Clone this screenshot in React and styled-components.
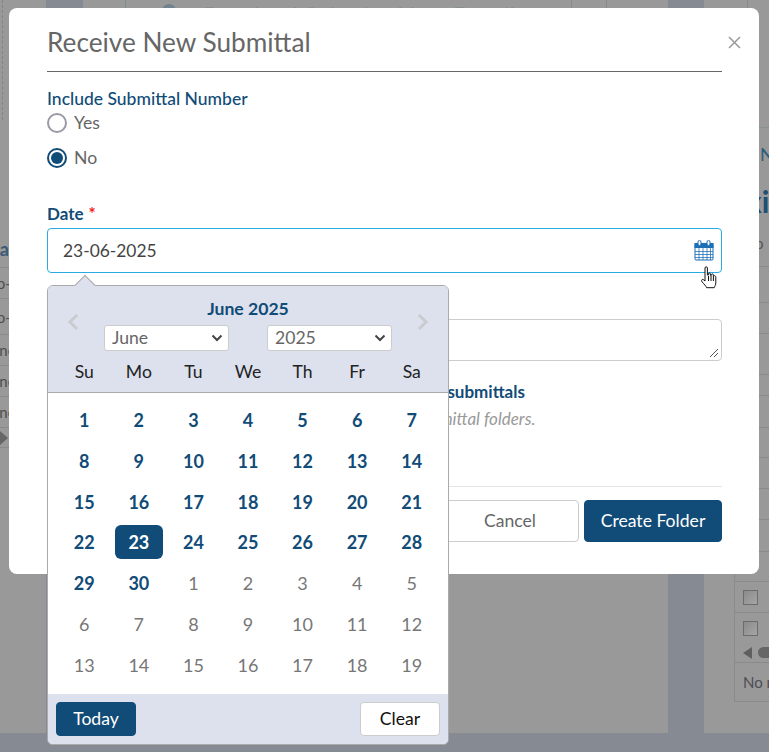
import React from 'react';
import styled, { createGlobalStyle } from 'styled-components';

const navy = '#114b77';
const headerBlue = '#dce1ed';

const selectChevron =
  "data:image/svg+xml,%3Csvg xmlns='http://www.w3.org/2000/svg' width='12' height='8' viewBox='0 0 12 8'%3E%3Cpath d='M1.500 1.500L6 6l4.500-4.500' fill='none' stroke='%23444' stroke-width='2'/%3E%3C/svg%3E";

const GlobalStyle = createGlobalStyle`
  html, body {
    margin: 0;
    padding: 0;
    height: 100%;
    overflow: hidden;
    font-family: Lato, 'Open Sans', sans-serif;
  }
`;

const Page = styled.div`
  width: 769px;
  height: 752px;
  background: #868a93;
  display: flex;
  align-items: flex-start;
  overflow: hidden;
`;

const BackPanel = styled.div`
  width: ${p => p.$width}px;
  height: 733px;
  margin-left: ${p => p.$gap || 0}px;
  background: #999;
  display: flex;
  flex-direction: column;
  flex: none;
  overflow: hidden;
`;

const DashedTick = styled.div`
  width: 0;
  height: 120px;
  margin-left: 2px;
  border-left: 1px dashed #7d8688;
  flex: none;
`;

const BackTitle = styled.div`
  width: 9px;
  margin-top: 117px;
  display: flex;
  justify-content: flex-end;
  font-size: 18px;
  line-height: 24px;
  font-weight: 700;
  color: #3a5a75;
`;

const BackRow = styled.div`
  width: 19px;
  height: ${p => p.$h || 31}px;
  box-sizing: border-box;
  display: flex;
  justify-content: flex-end;
  align-items: center;
  white-space: nowrap;
  font-size: 15px;
  color: #4d4d4d;
  border-top: 1px solid #8a8a8a;
`;

const BackLines = styled.div`
  margin-top: 6px;
`;

const BackArrowRow = styled.div`
  height: ${p => p.$h}px;
  box-sizing: border-box;
  border-top: 1px solid #8a8a8a;
  display: flex;
  align-items: flex-start;
`;

const BackArrow = styled.div`
  width: 0;
  height: 0;
  margin-top: 3px;
  border-top: 7px solid transparent;
  border-bottom: 7px solid transparent;
  border-left: 8px solid #666;
`;

const TopStrip = styled.div`
  height: 8px;
  display: flex;
  overflow: hidden;
  flex: none;
`;

const Tick = styled.div`
  width: 1px;
  height: 8px;
  background: #828b8d;
  margin-left: ${p => p.$left}px;
  flex: none;
`;

const BackIcon = styled.div`
  width: 14px;
  height: 14px;
  margin: 4px 0 0 36px;
  border-radius: 50%;
  background: #71838f;
  flex: none;
`;

const BackHeading = styled.div`
  width: 340px;
  margin: 0 0 0 27px;
  flex: none;
  font-size: 24px;
  line-height: 30px;
  color: #868f94;
  white-space: nowrap;
  overflow: hidden;
`;

const SideDash = styled.div`
  margin: 119px 0 0 55px;
  border-top: 1px dashed #85908f;
`;

const SideName = styled.div`
  margin: 14px 0 0 56px;
  font-size: 18px;
  line-height: 24px;
  color: #2f5a7b;
  white-space: nowrap;
`;

const SideBold = styled.div`
  margin: 15px 0 0 42px;
  font-size: 30px;
  line-height: 40px;
  font-weight: 700;
  color: #1f4f74;
  white-space: nowrap;
`;

const SideInfo = styled.div`
  margin: 12px 0 0 46px;
  font-size: 15px;
  line-height: 20px;
  color: #555;
  white-space: nowrap;
`;

const SideTable = styled.div`
  margin: 13px 0 0 30px;
  border-left: 1px solid #8a8a8a;
  border-bottom: 1px solid #8a8a8a;
  flex: none;
`;

const SideRow = styled.div`
  height: ${p => p.$h || 31}px;
  box-sizing: border-box;
  padding-left: 8px;
  display: flex;
  align-items: center;
  gap: 6px;
  border-top: ${p => (p.$flat ? '0' : '1px solid #8a8a8a')};
  font-size: 15px;
  color: #4d4d55;
  white-space: nowrap;
  overflow: hidden;
`;

const BackCheck = styled.div`
  width: 15px;
  height: 15px;
  box-sizing: border-box;
  border: 1px solid #6c6c6c;
  background: linear-gradient(135deg, #8b8b8b, #a5a5a5);
  flex: none;
`;

const ScrollArrow = styled.div`
  width: 0;
  height: 0;
  border-top: 6px solid transparent;
  border-bottom: 6px solid transparent;
  border-right: 9px solid #5f5f5f;
  flex: none;
`;

const ScrollThumb = styled.div`
  width: 30px;
  height: 11px;
  border-radius: 6px;
  background: #666;
  flex: none;
`;

const Modal = styled.div`
  position: absolute;
  left: 9px;
  top: 8px;
  width: 750px;
  height: 566px;
  box-sizing: border-box;
  padding: 0 37px 0 38px;
  background: #fff;
  border-radius: 8px;
`;

const ModalHeader = styled.div`
  height: 64px;
  box-sizing: border-box;
  padding-top: 17px;
  border-bottom: 1px solid #666;
  position: relative;
`;

const Title = styled.h2`
  margin: 0;
  font-size: 26.2px;
  line-height: 34px;
  font-weight: 400;
  color: #666;
`;

const CloseButton = styled.button`
  position: absolute;
  right: -19px;
  top: 28px;
  width: 13px;
  height: 13px;
  padding: 0;
  border: 0;
  background: none;
  display: block;
  line-height: 0;
`;

const FieldLabel = styled.div`
  margin-top: ${p => p.$top}px;
  font-size: ${p => p.$size || 17}px;
  line-height: 20px;
  font-weight: ${p => p.$weight || 700};
  color: ${navy};
  white-space: nowrap;
`;

const Required = styled.span`
  margin-left: 5px;
  color: #ee2222;
`;

const RadioGroup = styled.div`
  margin-top: 4px;
  display: flex;
  flex-direction: column;
  gap: 15px;
`;

const RadioRow = styled.div`
  height: 20px;
  display: flex;
  align-items: center;
  gap: 7px;
  font-size: 17.6px;
  color: #666;
`;

const RadioText = styled.span`
  line-height: 18px;
  margin-bottom: 1px;
`;

const RadioMark = styled.span`
  width: 20px;
  height: 20px;
  box-sizing: border-box;
  border-radius: 50%;
  border: 2px solid ${p => (p.$on ? navy : '#9a9aa6')};
  display: flex;
  align-items: center;
  justify-content: center;
  &::after {
    content: '';
    width: 12px;
    height: 12px;
    border-radius: 50%;
    background: ${p => (p.$on ? navy : 'transparent')};
  }
`;

const DateField = styled.div`
  position: relative;
  margin-top: 4px;
`;

const DateInput = styled.div`
  height: 45px;
  box-sizing: border-box;
  padding: 0 7px 0 15px;
  border: 1px solid #29abe2;
  border-radius: 4px;
  display: flex;
  align-items: center;
  justify-content: space-between;
  font-size: 17.4px;
  color: #444;
`;

const CursorHand = styled.svg`
  position: absolute;
  right: 4px;
  top: 38px;
`;

const Popover = styled.div`
  position: absolute;
  left: 0;
  top: 57px;
  width: 402px;
  height: 460px;
  box-sizing: border-box;
  border: 1px solid #aaa;
  border-radius: 6px;
  background: #fff;
  display: flex;
  flex-direction: column;
  z-index: 2;
  &::before {
    content: '';
    position: absolute;
    left: 29px;
    top: -8px;
    width: 15px;
    height: 15px;
    background: ${headerBlue};
    border-left: 1px solid #aaa;
    border-top: 1px solid #aaa;
    transform: rotate(45deg);
  }
`;

const PopHeader = styled.div`
  background: ${headerBlue};
  border-bottom: 1px solid #aaa;
  border-radius: 5px 5px 0 0;
  padding-top: 11px;
  position: relative;
`;

const NavGrid = styled.div`
  display: grid;
  grid-template-columns: 56px 1fr 56px;
  grid-template-rows: 24px 30px;
`;

const NavArrow = styled.div`
  grid-row: 1 / span 2;
  grid-column: ${p => (p.$right ? 3 : 1)};
  display: flex;
  align-items: center;
  justify-content: ${p => (p.$right ? 'flex-start' : 'flex-end')};
  padding: 0 ${p => (p.$right ? 0 : 25)}px 5px ${p => (p.$right ? 25 : 0)}px;
  line-height: 0;
`;

const MonthTitle = styled.div`
  grid-column: 2;
  grid-row: 1;
  text-align: center;
  font-size: 17.6px;
  line-height: 24px;
  font-weight: 700;
  color: ${navy};
`;

const SelectRow = styled.div`
  grid-column: 2;
  grid-row: 2;
  display: flex;
  justify-content: space-between;
  align-items: flex-end;
`;

const NativeSelect = styled.select`
  appearance: none;
  width: 125px;
  height: 26px;
  box-sizing: border-box;
  padding: 0 0 2px 7px;
  font-family: Lato, sans-serif;
  font-size: 17.6px;
  color: #666;
  background: #fff url("${selectChevron}") no-repeat right 5px center;
  border: 1px solid #ccc;
  border-radius: 3px;
`;

const WeekRow = styled.div`
  display: grid;
  grid-template-columns: repeat(7, 1fr);
  padding: 9px 9px 8px;
  text-align: center;
  font-size: 17.6px;
  line-height: 24px;
  color: #222;
`;

const DayGrid = styled.div`
  flex: 1;
  display: grid;
  grid-template-columns: repeat(7, 1fr);
  grid-auto-rows: 34px;
  row-gap: 6.8px;
  padding: 10px 9px 0;
`;

const Day = styled.div`
  width: 48px;
  justify-self: center;
  display: flex;
  align-items: center;
  justify-content: center;
  border-radius: 6px;
  font-size: 18px;
  font-weight: ${p => (p.$muted ? 400 : 700)};
  color: ${p => (p.$selected ? '#fff' : p.$muted ? '#777' : navy)};
  background: ${p => (p.$selected ? navy : 'transparent')};
`;

const PopFooter = styled.div`
  height: 50px;
  box-sizing: border-box;
  padding: 8px;
  background: ${headerBlue};
  border-radius: 0 0 5px 5px;
  display: flex;
  justify-content: space-between;
  align-items: center;
`;

const SmallButton = styled.button`
  width: 80px;
  height: 34px;
  padding: 0 0 2px;
  font-family: Lato, sans-serif;
  font-size: 17.6px;
  border-radius: 4px;
  border: 1px solid ${p => (p.$primary ? navy : '#ccc')};
  background: ${p => (p.$primary ? navy : '#fff')};
  color: ${p => (p.$primary ? '#fff' : '#111')};
`;

const NotesBox = styled.div`
  margin-top: 4px;
  height: 42px;
  box-sizing: border-box;
  border: 1px solid #ccc;
  border-radius: 4px;
  position: relative;
  line-height: 0;
`;

const ResizeGrip = styled.svg`
  position: absolute;
  right: 1px;
  bottom: 1px;
`;

const HintText = styled.div`
  margin-top: 7px;
  padding-left: 272px;
  font-size: 17px;
  line-height: 20px;
  font-style: italic;
  color: #999;
  white-space: nowrap;
`;

const CheckLabel = styled(FieldLabel)`
  padding-left: 277px;
`;

const ModalFooter = styled.div`
  margin-top: 57px;
  padding-top: 13px;
  border-top: 1px solid #e5e5e5;
  display: flex;
  justify-content: flex-end;
  gap: 5px;
`;

const FooterButton = styled.button`
  width: 138px;
  height: 42px;
  padding: 0 0 2px;
  font-family: Lato, sans-serif;
  font-size: 17.6px;
  border-radius: 4px;
  border: 1px solid ${p => (p.$primary ? navy : '#ccc')};
  background: ${p => (p.$primary ? navy : '#fff')};
  color: ${p => (p.$primary ? '#fff' : '#666')};
`;

const CalendarIcon = () => (
  <svg width="20" height="21" viewBox="0 0 20 21" fill="none">
    <rect x="1" y="3.5" width="18" height="16.5" rx="1" fill="#fff" stroke="#1a6fb5" />
    <rect x="0.5" y="3" width="19" height="5" fill="#1a6fb5" />
    <rect x="4" y="0.5" width="3" height="5" rx="1.5" fill="#fff" stroke="#1a6fb5" />
    <rect x="13" y="0.5" width="3" height="5" rx="1.5" fill="#fff" stroke="#1a6fb5" />
    <path
      d="M1 11.5h18M1 14.5h18M1 17.5h18M5 8v12M9 8v12M13 8v12M16.5 8v12"
      stroke="#1a6fb5"
      strokeWidth="1"
      opacity="0.75"
    />
  </svg>
);

const Chevron = ({ right }) => (
  <svg width="12" height="18" viewBox="0 0 12 18" fill="none">
    <path
      d={right ? 'M2 2l7 7-7 7' : 'M10 2L3 9l7 7'}
      stroke="#c9cbce"
      strokeWidth="3"
    />
  </svg>
);

const weekDays = ['Su', 'Mo', 'Tu', 'We', 'Th', 'Fr', 'Sa'];
const months = ['January', 'February', 'March', 'April', 'May', 'June', 'July', 'August', 'September', 'October', 'November', 'December'];
const years = [2023, 2024, 2025, 2026, 2027];

const june = Array.from({ length: 30 }, (_, i) => ({ n: i + 1 }));
const july = Array.from({ length: 19 }, (_, i) => ({ n: i + 1, muted: true }));
const days = [...june, ...july];

// rows of the grey table behind the dialog
const sideRows = [36, 31, 41, 21, 32, 30, 31, 31, 32, 30];

export default function App() {
  return (
    <>
      <GlobalStyle />
      <Page>
        <BackPanel $width={46}>
          <DashedTick />
          <BackTitle>Data</BackTitle>
          <BackLines>
            <BackRow>No-S</BackRow>
            <BackRow $h={36}>No-S</BackRow>
            <BackRow>None,</BackRow>
            <BackRow>None,</BackRow>
            <BackRow>None,</BackRow>
            <BackArrowRow $h={20}>
              <BackArrow />
            </BackArrowRow>
            <BackRow $h={38} />
          </BackLines>
        </BackPanel>

        <BackPanel $width={585} $gap={37}>
          <TopStrip>
            <Tick $left={42} />
            <BackIcon />
            <BackHeading>Received Submittal Log Details</BackHeading>
            <Tick $left={28} />
            <Tick $left={34} />
          </TopStrip>
        </BackPanel>

        <BackPanel $width={65} $gap={36}>
          <TopStrip>
            <Tick $left={43} />
          </TopStrip>
          <SideDash />
          <SideName>Name</SideName>
          <SideBold>xisting</SideBold>
          <SideInfo>fo</SideInfo>
          <SideTable>
            {sideRows.map((h, i) => (
              <SideRow key={i} $h={h} />
            ))}
            <SideRow>
              <BackCheck />
            </SideRow>
            <SideRow>
              <BackCheck />
            </SideRow>
            <SideRow $h={19} $flat>
              <ScrollArrow />
              <ScrollThumb />
            </SideRow>
            <SideRow $h={39}>No matching records</SideRow>
          </SideTable>
        </BackPanel>
      </Page>

      <Modal>
        <ModalHeader>
          <Title>Receive New Submittal</Title>
          <CloseButton aria-label="Close">
            <svg width="13" height="13" viewBox="0 0 13 13" fill="none">
              <path d="M1 1l11 11M12 1L1 12" stroke="#999" strokeWidth="1.5" />
            </svg>
          </CloseButton>
        </ModalHeader>

        <FieldLabel $top={17} $weight={500} $size={17.5}>Include Submittal Number</FieldLabel>
        <RadioGroup>
          <RadioRow><RadioMark /><RadioText>Yes</RadioText></RadioRow>
          <RadioRow><RadioMark $on /><RadioText>No</RadioText></RadioRow>
        </RadioGroup>

        <FieldLabel $top={36}>Date<Required>*</Required></FieldLabel>
        <DateField>
          <DateInput>
            23-06-2025
            <CalendarIcon />
          </DateInput>
          <CursorHand width="18" height="24" viewBox="0 0 18 24">
            <path
              d="M5 2c0-1.6 2.4-1.6 2.4 0v7l1 .1V7.8c0-1 2-1 2 0v1.5l1 .1V8.6c0-1 1.9-1 1.9 0v1l.9.1c1-.1 1.6.5 1.6 1.5v5.6c0 2.2-1 3.2-1.6 4.9H6.6c-.6-1.6-2.3-3.2-4.6-6-1.3-1.6.5-3 1.8-1.8L5 15z"
              fill="#fff"
              stroke="#111"
              strokeWidth="1"
            />
            <path d="M8.5 10v5M11 10v5M13.4 10v5" stroke="#111" strokeWidth="1" />
          </CursorHand>

          <Popover>
            <PopHeader>
              <NavGrid>
                <NavArrow><Chevron /></NavArrow>
                <MonthTitle>June 2025</MonthTitle>
                <NavArrow $right><Chevron right /></NavArrow>
                <SelectRow>
                  <NativeSelect defaultValue="June">
                    {months.map(m => <option key={m}>{m}</option>)}
                  </NativeSelect>
                  <NativeSelect defaultValue="2025">
                    {years.map(y => <option key={y}>{y}</option>)}
                  </NativeSelect>
                </SelectRow>
              </NavGrid>
              <WeekRow>
                {weekDays.map(d => <div key={d}>{d}</div>)}
              </WeekRow>
            </PopHeader>
            <DayGrid>
              {days.map((d, i) => (
                <Day key={i} $muted={d.muted} $selected={!d.muted && d.n === 23}>{d.n}</Day>
              ))}
            </DayGrid>
            <PopFooter>
              <SmallButton $primary>Today</SmallButton>
              <SmallButton>Clear</SmallButton>
            </PopFooter>
          </Popover>
        </DateField>

        <FieldLabel $top={22}>Notes</FieldLabel>
        <NotesBox>
          <ResizeGrip width="12" height="12" viewBox="0 0 12 12" fill="none">
            <path d="M2 10l8-8M6 10l4-4" stroke="#555" strokeWidth="1" />
          </ResizeGrip>
        </NotesBox>

        <CheckLabel $top={21}>Add to received submittals</CheckLabel>
        <HintText>Shown in the submittal folders.</HintText>

        <ModalFooter>
          <FooterButton>Cancel</FooterButton>
          <FooterButton $primary>Create Folder</FooterButton>
        </ModalFooter>
      </Modal>
    </>
  );
}
